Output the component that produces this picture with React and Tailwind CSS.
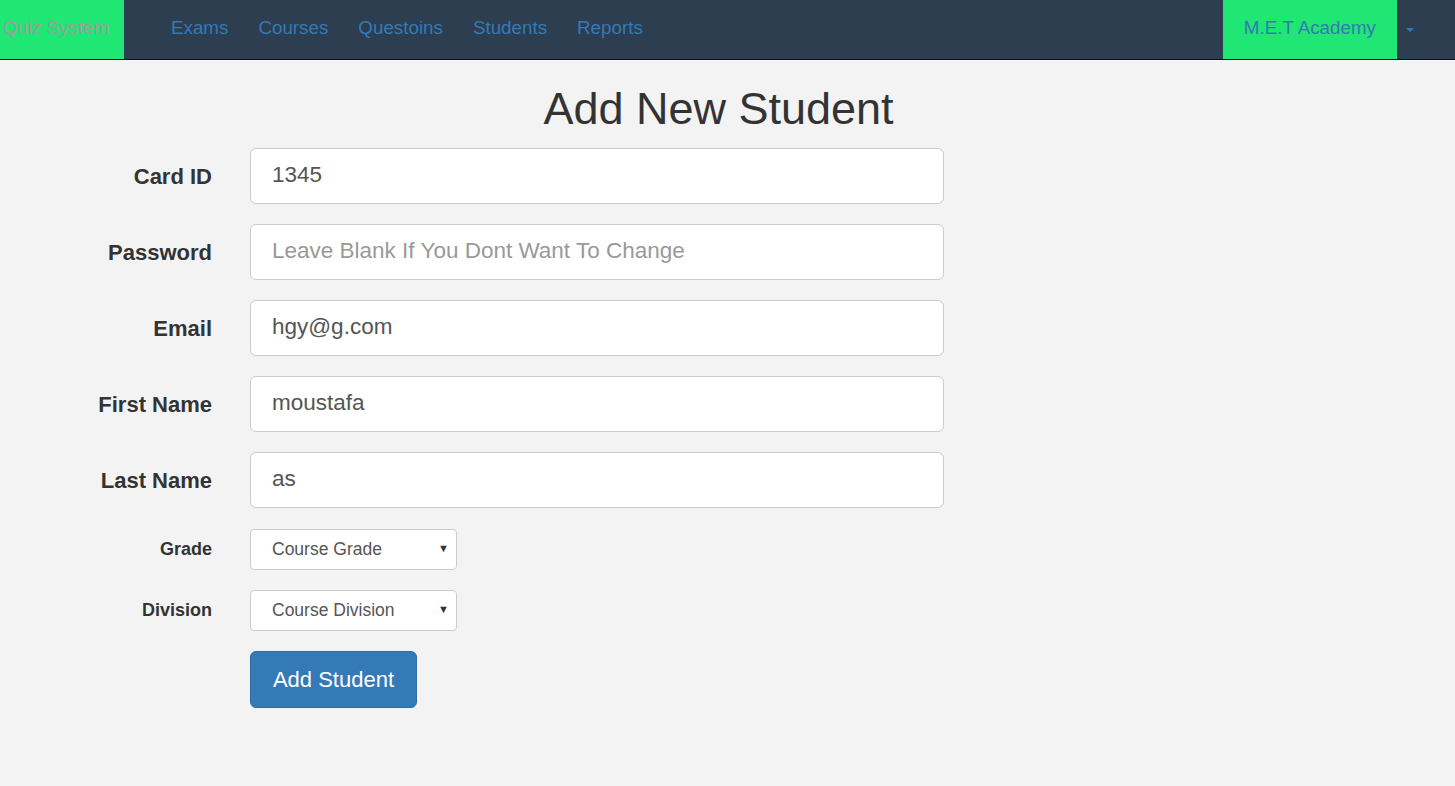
import { useState } from "react";

const navLinks = ["Exams", "Courses", "Questoins", "Students", "Reports"];

const Field = ({ label, value, placeholder, onChange }) => (
  <div className="flex items-center mb-5">
    <label className="w-[213px] pr-px text-right text-[22px] font-bold text-[#333]">{label}</label>
    <input
      value={value}
      placeholder={placeholder}
      onChange={(e) => onChange(e.target.value)}
      className="ml-[37px] w-[694px] h-[56px] px-[21px] pb-[3px] bg-white border border-[#ccc] rounded-[6px] text-[22.5px] text-[#555] placeholder:text-[#999] outline-none"
    />
  </div>
);

const SelectField = ({ label, options, className }) => (
  <div className={"flex items-center mb-5 " + (className || "")}>
    <label className="w-[213px] pr-px text-right text-[18px] font-bold text-[#333]">{label}</label>
    <div className="relative ml-[37px]">
      <select className="appearance-none w-[207px] h-[41px] pl-[21px] pr-8 bg-white border border-[#ccc] rounded-[4px] text-[17.5px] text-[#555] outline-none">
        {options.map((o) => (
          <option key={o}>{o}</option>
        ))}
      </select>
      <span className="pointer-events-none absolute right-[8px] top-[11px] text-[11px] text-[#333]">▼</span>
    </div>
  </div>
);

export default function App() {
  const [form, setForm] = useState({ cardId: "1345", password: "", email: "hgy@g.com", first: "moustafa", last: "as" });
  const set = (k) => (v) => setForm({ ...form, [k]: v });

  return (
    <div className="min-h-[786px] bg-[#f3f3f3] font-['Liberation_Sans',Arial,sans-serif]">
      <nav className="flex h-[60px] bg-[#2c3e50] border-b border-[#111]">
        <div className="flex items-center w-[124px] pl-[3px] pb-[2px] bg-[#20e673] text-[18.8px] text-[#9d9d9d]">Quiz System</div>
        <ul className="flex items-center pb-[2px] ml-[32px]">
          {navLinks.map((l) => (
            <li key={l} className="px-[15px] text-[18.8px] text-[#337ab7]">{l}</li>
          ))}
        </ul>
        <div className="ml-auto flex items-center">
          <div className="flex items-center h-full px-[21px] pb-[2px] bg-[#20e673] text-[18.8px] text-[#337ab7]">M.E.T Academy</div>
          <span className="ml-[9px] mr-[41px] w-0 h-0 border-l-[4px] border-r-[4px] border-t-[4px] border-l-transparent border-r-transparent border-t-[#337ab7]"></span>
        </div>
      </nav>

      <h1 className="mt-[24px] pr-[18px] text-center text-[45px] leading-[50px] text-[#333]">Add New Student</h1>

      <form className="mt-[14px]" onSubmit={(e) => e.preventDefault()}>
        <Field label="Card ID" value={form.cardId} onChange={set("cardId")} />
        <Field label="Password" value={form.password} placeholder="Leave Blank If You Dont Want To Change" onChange={set("password")} />
        <Field label="Email" value={form.email} onChange={set("email")} />
        <Field label="First Name" value={form.first} onChange={set("first")} />
        <Field label="Last Name" value={form.last} onChange={set("last")} />
        <SelectField label="Grade" options={["Course Grade"]} className="pt-px" />
        <SelectField label="Division" options={["Course Division"]} />
        <div className="pl-[250px]">
          <button className="h-[57px] w-[167px] bg-[#337ab7] border border-[#2e6da4] rounded-[6px] text-[22px] text-white">Add Student</button>
        </div>
      </form>
    </div>
  );
}
